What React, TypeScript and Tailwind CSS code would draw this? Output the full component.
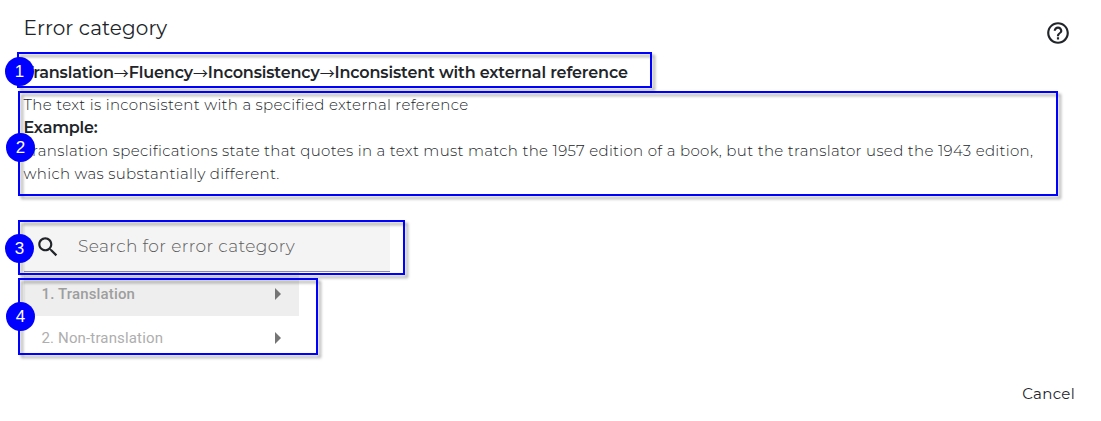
import { Fragment, type ReactNode } from "react";

const BREADCRUMB = ["Translation", "Fluency", "Inconsistency", "Inconsistent with external reference"];

const CATEGORIES = [
  { label: "1. Translation", active: true },
  { label: "2. Non-translation", active: false },
];

const CALLOUTS = [
  { n: 1, box: "left-[17px] top-[52px] h-[36px] w-[635px]", dot: "left-[5px] top-[57px]" },
  { n: 2, box: "left-[18px] top-[91px] h-[105px] w-[1040px]", dot: "left-[6px] top-[133px]" },
  { n: 3, box: "left-[18px] top-[220px] h-[55px] w-[387px]", dot: "left-[5px] top-[234px]" },
  { n: 4, box: "left-[18px] top-[278px] h-[77px] w-[300px]", dot: "left-[6px] top-[302px]" },
];

function Icon({ className, children }: { className: string; children: ReactNode }) {
  return (
    <svg viewBox="0 0 24 24" fill="currentColor" className={className}>
      {children}
    </svg>
  );
}

function Callouts() {
  return (
    <div className="pointer-events-none absolute inset-0">
      {CALLOUTS.map((c) => (
        <div
          key={c.n}
          className={`absolute border-2 border-[#0000ff] drop-shadow-[3px_3px_1.5px_rgba(0,0,0,0.35)] ${c.box}`}
        />
      ))}
      {CALLOUTS.map((c) => (
        <span
          key={c.n}
          className={`absolute flex size-[29px] items-center justify-center rounded-full bg-[#0000ff] font-['Liberation_Sans',sans-serif] text-[17px] leading-none text-white ${c.dot}`}
        >
          {c.n}
        </span>
      ))}
    </div>
  );
}

export default function App() {
  return (
    <div className="relative flex h-[421px] w-[1101px] flex-col overflow-hidden bg-white font-['Montserrat',Inter,sans-serif] text-[#212529]">
      <header className="flex h-[61px] items-start justify-between pr-[30px] pl-[23.500px]">
        <h1 className="pt-[13px] text-[20px] leading-[30px] tracking-[0.08px] whitespace-nowrap">Error category</h1>
        <Icon className="mt-[20px] size-[26px]">
          <path d="M11 18h2v-2h-2v2zm1-16C6.48 2 2 6.48 2 12s4.48 10 10 10 10-4.480 10-10S17.52 2 12 2zm0 18c-4.410 0-8-3.590-8-8s3.590-8 8-8 8 3.590 8 8-3.590 8-8 8zm0-14c-2.210 0-4 1.790-4 4h2c0-1.100.9-2 2-2s2 .9 2 2c0 2-3 1.750-3 5h2c0-2.250 3-2.500 3-5 0-2.210-1.790-4-4-4z" />
        </Icon>
      </header>

      <div className="flex h-[23px] items-center pl-6 text-[16px] font-semibold tracking-[-0.14px] whitespace-nowrap">
        {BREADCRUMB.map((part, i) => (
          <Fragment key={part}>
            {i > 0 && (
              <span className="font-['Noto_Sans_CJK_JP',sans-serif] text-[15px] leading-none font-normal">→</span>
            )}
            <span>{part}</span>
          </Fragment>
        ))}
      </div>

      <section className="mt-[9px] flex h-[128px] flex-col items-start pl-[23.500px] text-[15px] leading-[23px] font-light tracking-[0.32px] whitespace-nowrap">
        <p>The text is inconsistent with a specified external reference</p>
        <p className="text-[16px] font-semibold tracking-[-0.2px]">Example:</p>
        <p>
          Translation specifications state that quotes in a text must match the 1957 edition of a book, but the translator used the 1943 edition,
        </p>
        <p>which was substantially different.</p>
      </section>

      <label className="ml-6 flex h-[51px] w-[366px] items-center border-b border-[#8e8e8e] bg-[#f4f4f4] pl-[10.500px]">
        <Icon className="mt-[2px] size-[26px]">
          <path d="M15.500 14h-.79l-.28-.27C15.410 12.590 16 11.110 16 9.500 16 5.910 13.090 3 9.500 3S3 5.910 3 9.500 5.910 16 9.500 16c1.610 0 3.090-.59 4.230-1.570l.27.28v.79l5 4.990L20.490 19l-4.990-5zm-6 0C7.010 14 5 11.990 5 9.500S7.010 5 9.500 5 14 7.010 14 9.500 11.990 14 9.500 14z" />
        </Icon>
        <span className="mt-[2px] ml-[17.500px] text-[17px] font-light tracking-[0.4px] text-[#5c5c5c]">
          Search for error category
        </span>
      </label>

      <ul className="ml-6 w-[275px] font-[Roboto,sans-serif] text-[15px] tracking-[0.15px]">
        {CATEGORIES.map((c) => (
          <li
            key={c.label}
            className={`flex h-[44px] items-center justify-between pr-[18px] pl-[17.500px] ${
              c.active ? "bg-[#eeeeee] font-medium text-[#9e9e9e]" : "text-[#aeaeae]"
            }`}
          >
            <span>{c.label}</span>
            <svg viewBox="0 0 6 12" className="h-[12px] w-[6px] fill-[#757575]">
              <path d="M0 0L6 6L0 12Z" />
            </svg>
          </li>
        ))}
      </ul>

      <footer className="mt-[22px] flex justify-end pr-[26px]">
        <button type="button" className="text-[15px] leading-[24px] tracking-[0.3px]">
          Cancel
        </button>
      </footer>

      <Callouts />
    </div>
  );
}
